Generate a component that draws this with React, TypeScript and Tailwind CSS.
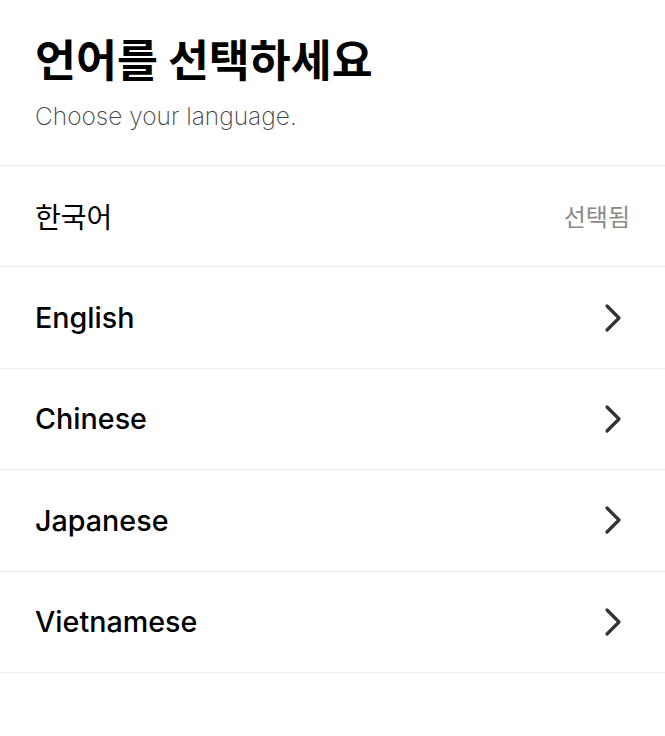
import React from "react";

const langs = ["English", "Chinese", "Japanese", "Vietnamese"];

function Chevron() {
  return (
    <svg width="20" height="30" viewBox="0 0 20 30" fill="none">
      <path d="M4 3 L16 15 L4 27" stroke="#333" strokeWidth="3.2" strokeLinecap="round" strokeLinejoin="round" />
    </svg>
  );
}

export default function App() {
  return (
    <div className="w-[665px] h-[736px] bg-white" style={{ fontFamily: 'Inter, "Noto Sans CJK KR", sans-serif' }}>
      <div className="px-[35px] pt-[28px] pb-[33px]">
        <h1 className="text-[44.5px] leading-[60px] font-bold text-black" style={{ fontFamily: '"Noto Sans CJK KR", sans-serif' }}>
          언어를 선택하세요
        </h1>
        <p className="mt-[12px] text-[24.5px] leading-[32px] font-extralight text-[#444]">Choose your language.</p>
      </div>
      <div className="border-t border-[#ececec]">
        <div className="h-[101.4px] flex items-center justify-between px-[35px] border-b border-[#ececec]">
          <span className="text-[28px] text-black" style={{ fontFamily: '"Noto Sans CJK KR", sans-serif' }}>한국어</span>
          <span className="text-[24px] text-[#8a8a8a]" style={{ fontFamily: '"Noto Sans CJK KR", sans-serif' }}>선택됨</span>
        </div>
        {langs.map((l) => (
          <div key={l} className="h-[101.4px] flex items-center justify-between pl-[35px] pr-[42px] border-b border-[#ececec]">
            <span className="text-[28.7px] font-medium text-black">{l}</span>
            <Chevron />
          </div>
        ))}
      </div>
    </div>
  );
}
